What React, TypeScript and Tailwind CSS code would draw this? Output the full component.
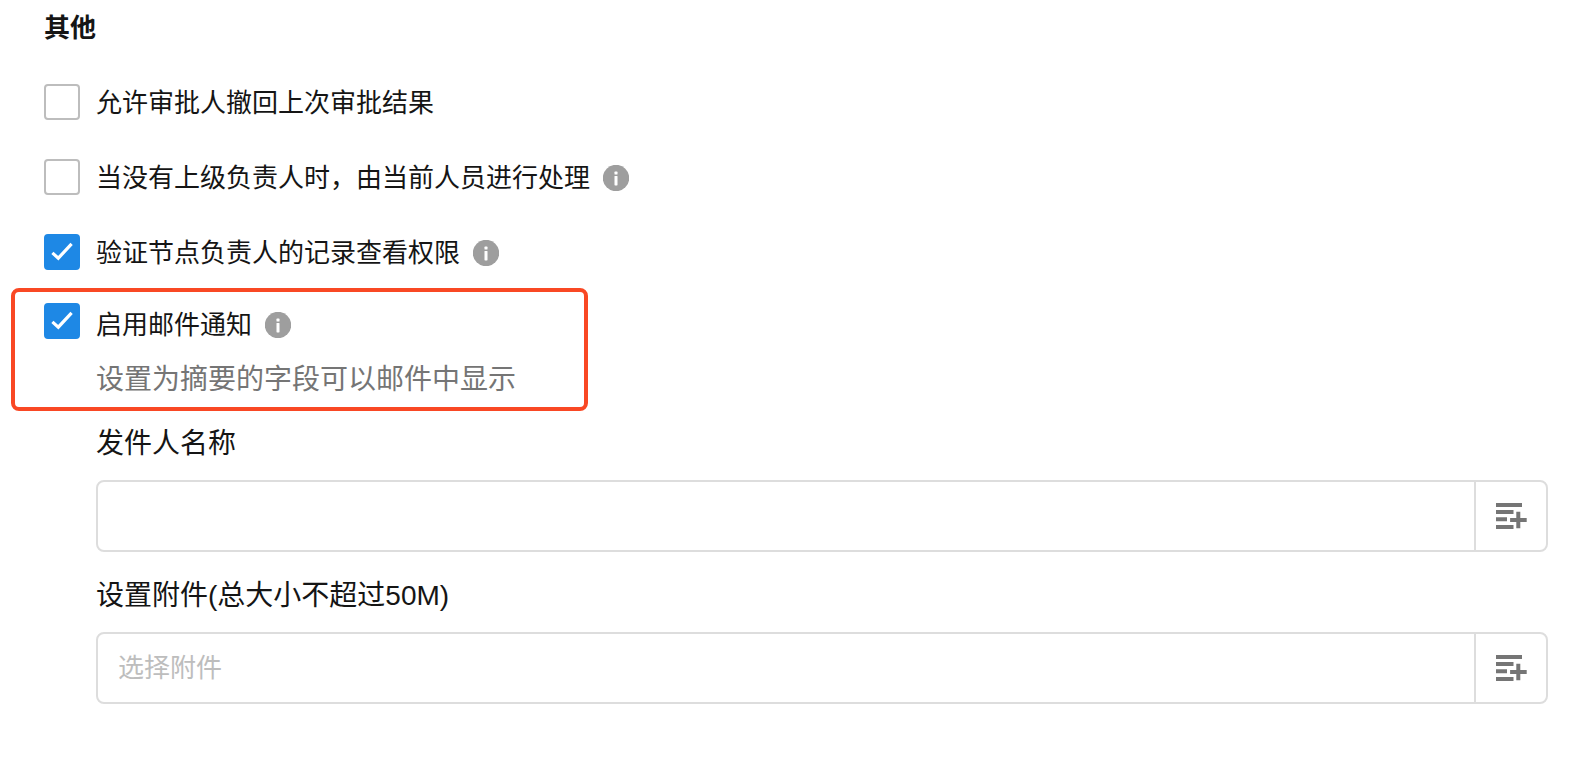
import { useState } from "react";

function InfoButton({ label }: { label: string }) {
  return (
    <button type="button" aria-label={label} className="size-[26px] shrink-0 cursor-pointer">
      <svg viewBox="0 0 26 26" className="size-full" aria-hidden="true">
        <circle cx="13" cy="13" r="13.2" fill="#9e9e9e" />
        <rect x="11.5" y="6.6" width="3" height="3" rx="0.6" fill="#fff" />
        <rect x="11.5" y="11" width="3" height="9.4" rx="0.6" fill="#fff" />
      </svg>
    </button>
  );
}

function CheckBox({ id, defaultChecked }: { id: string; defaultChecked?: boolean }) {
  return (
    <span className="grid size-9 shrink-0">
      <input
        id={id}
        type="checkbox"
        defaultChecked={defaultChecked}
        className="peer col-start-1 row-start-1 size-9 cursor-pointer appearance-none rounded border-2 border-[#bdbdbd] bg-white checked:border-[#1e88e5] checked:bg-[#1e88e5]"
      />
      <svg
        viewBox="0 0 36 36"
        className="pointer-events-none invisible col-start-1 row-start-1 size-9 peer-checked:visible"
        aria-hidden="true"
      >
        <path d="M8.4 18.9 14.3 24.2 27.6 9.8" fill="none" stroke="#fff" strokeWidth="3.2" />
      </svg>
    </span>
  );
}

function OptionRow({
  id,
  label,
  info,
  defaultChecked,
}: {
  id: string;
  label: string;
  info?: boolean;
  defaultChecked?: boolean;
}) {
  return (
    <div className="mt-[37px] flex items-start gap-4">
      <CheckBox id={id} defaultChecked={defaultChecked} />
      <div className="flex items-center gap-[13px]">
        <label htmlFor={id} className="cursor-pointer text-[26px] leading-[38px]">
          {label}
        </label>
        {info && <InfoButton label={label} />}
      </div>
    </div>
  );
}

function AddFieldIcon() {
  return (
    <svg width="31" height="26" viewBox="0 0 31 26" fill="#757575" aria-hidden="true">
      <path d="M0 0h26v4H0zM0 7h17.5v4H0zM0 14.2h11v4H0zM0 22h17.5v4H0z" />
      <path d="M20.3 8.7h4v6.4h6.4v3.8h-6.4v6.3h-4v-6.3h-6.2v-3.8h6.2z" />
    </svg>
  );
}

function Field({ id, label, placeholder }: { id: string; label: string; placeholder?: string }) {
  const [value, setValue] = useState("");

  return (
    <div>
      <label htmlFor={id} className="block text-[28px] leading-10">
        {label}
      </label>
      <div className="mt-4 flex h-[72px] overflow-hidden rounded-lg border-2 border-[#dddddd]">
        <input
          id={id}
          type="text"
          value={value}
          placeholder={placeholder}
          onChange={(e) => setValue(e.target.value)}
          className="min-w-0 flex-1 px-5 text-[26px] outline-none placeholder:text-[#bdbdbd]"
        />
        <button
          type="button"
          aria-label={`${label} +`}
          className="flex w-[72px] shrink-0 cursor-pointer items-center justify-center border-l-2 border-[#dddddd]"
        >
          <AddFieldIcon />
        </button>
      </div>
    </div>
  );
}

export default function App() {
  return (
    <main
      lang="zh-CN"
      className="min-h-screen bg-white pt-[9px] pr-8 pb-10 pl-11 font-['Liberation_Sans','Noto_Sans_CJK_SC',sans-serif] text-[#151515]"
    >
      <h2 className="text-[26px] leading-[38px] font-bold">其他</h2>

      <OptionRow id="withdraw" label="允许审批人撤回上次审批结果" />
      <OptionRow id="fallback" label="当没有上级负责人时，由当前人员进行处理" info />
      <OptionRow id="verify" label="验证节点负责人的记录查看权限" info defaultChecked />

      {/* Highlighted mail option */}
      <section className="mt-4 -ml-[33px] w-[577px] max-w-full rounded-lg border-4 border-[#f94824] pt-[11px] pr-4 pb-[7px] pl-[29px]">
        <div className="flex items-start gap-4">
          <CheckBox id="mail" defaultChecked />
          <div>
            <div className="flex items-center gap-[13px]">
              <label htmlFor="mail" className="cursor-pointer text-[26px] leading-[44px]">
                启用邮件通知
              </label>
              <InfoButton label="启用邮件通知" />
            </div>
            <p className="mt-[13px] text-[28px] leading-10 text-[#757575]">设置为摘要的字段可以邮件中显示</p>
          </div>
        </div>
      </section>

      <div className="mt-[13px] ml-[52px] flex flex-col gap-6">
        <Field id="sender" label="发件人名称" />
        <Field id="attachment" label="设置附件(总大小不超过50M)" placeholder="选择附件" />
      </div>
    </main>
  );
}
